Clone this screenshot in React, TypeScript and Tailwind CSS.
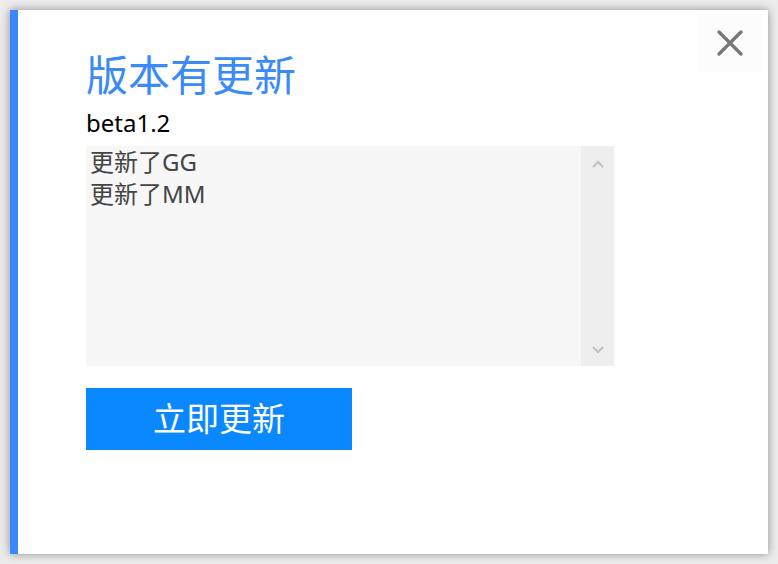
import { X } from "lucide-react";

const cjk = '"Noto Sans", "Noto Sans CJK SC", sans-serif';

function ScrollArrow({ up }: { up?: boolean }) {
  return (
    <svg width="12" height="8" viewBox="0 0 12 8" className="text-[#c2c2c2]">
      <path
        d={up ? "M1 7 L6 2 L11 7" : "M1 1 L6 6 L11 1"}
        fill="none"
        stroke="currentColor"
        strokeWidth="2"
      />
    </svg>
  );
}

export default function App() {
  const notes = ["更新了GG", "更新了MM"];

  return (
    <div className="h-[564px] w-[778px] overflow-hidden bg-[#ececec] p-[10px]" style={{ fontFamily: cjk }}>
      <div className="relative h-[544px] w-[758px] border-l-8 border-[#3b87fb] bg-white pl-[68px] pt-[39px] shadow-[0_0_9px_rgba(0,0,0,0.4)]">
        <button className="absolute right-[6px] top-[3px] flex h-[60px] w-[64px] items-center justify-center bg-[#fcfcfc] text-[#777777]">
          <X size={44} strokeWidth={1.8} />
        </button>

        <h1 className="text-[42px] leading-[52px] text-[#3a8af8]">版本有更新</h1>
        <p className="mt-[7px] text-[24px] leading-[30px] text-black">beta1.2</p>

        <div className="mt-[8px] flex h-[220px] w-[528px] bg-[#f7f7f7]">
          <div className="flex-1 pl-[4px] text-[24px] leading-[32px] text-[#444444]">
            {notes.map((line) => (
              <div key={line}>{line}</div>
            ))}
          </div>
          <div className="flex w-[33px] flex-col items-center justify-between bg-[#eeeeee] pb-[12px] pt-[14px]">
            <ScrollArrow up />
            <ScrollArrow />
          </div>
        </div>

        <button className="mt-[22px] h-[62px] w-[266px] bg-[#0a88ff] text-[33px] text-white">立即更新</button>
      </div>
    </div>
  );
}
